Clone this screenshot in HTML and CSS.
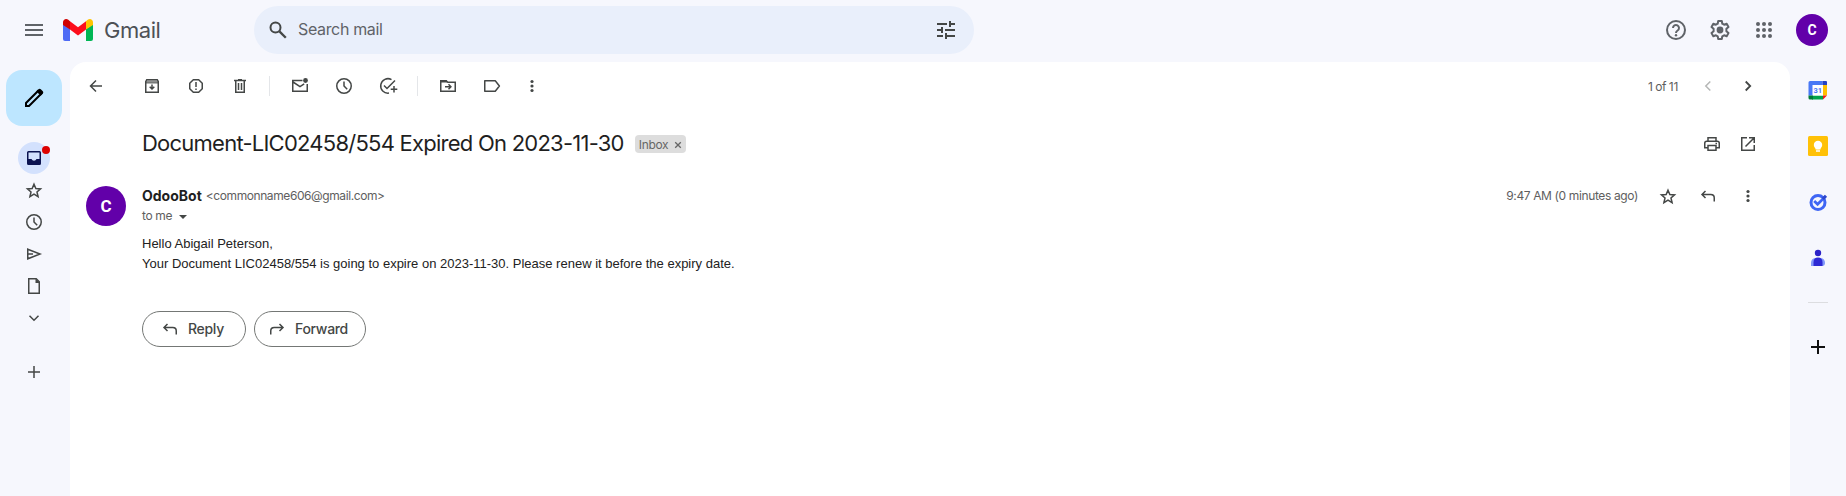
FILE: index.html
```html
<!DOCTYPE html>
<html lang="en">
<head>
<meta charset="utf-8">
<title>Gmail</title>
<link rel="stylesheet" href="styles.css">
</head>
<body>
<svg class="defs" aria-hidden="true">
  <symbol id="clock" viewBox="0 0 20 20"><circle cx="10" cy="10" r="7.25"/><path d="M10 5.5V10l3.2 3.3"/></symbol>
  <symbol id="star" viewBox="0 0 20 20"><path d="M10 4.200l1.850 4.300 4.700.4-3.560 3.100 1.080 4.600L10 14.150 5.930 16.600l1.080-4.600-3.560-3.100 4.700-.4z"/></symbol>
  <symbol id="dots" viewBox="0 0 20 20"><g fill="currentColor" stroke="none"><circle cx="10" cy="5.5" r="1.6"/><circle cx="10" cy="10" r="1.6"/><circle cx="10" cy="14.5" r="1.6"/></g></symbol>
  <symbol id="reply" viewBox="0 0 20 20"><path d="M7.500 5L4 8.500 7.500 12M4 8.500h8.800q3.450 0 3.450 3.400v3.600"/></symbol>
</svg>
<div class="app">
  <header class="header">
    <button class="menu"><svg class="i" viewBox="0 0 20 20"><path stroke-width="2" d="M1 5h18M1 10h18M1 15h18"/></svg></button>
    <div class="brand">
      <svg class="logo" viewBox="0 0 30 22"><path fill="#4f6bf5" d="M0 5l7 5v12H2a2 2 0 0 1-2-2z"/><path fill="#00b655" d="M23 10l7-5v15a2 2 0 0 1-2 2h-5z"/><path fill="#fc0d1b" d="M7 2.2l8 6 8-6v8.2l-8 6-8-6z"/><path fill="#d00000" d="M0 7V3.3C0 .5 3-.9 5.3.8L7 2.2v8.2L0 6z"/><path fill="#ffc400" d="M23 2.2L24.7.8C27-.9 30 .5 30 3.3V6l-7 4.4z"/></svg>
      <span class="wordmark">Gmail</span>
    </div>
    <div class="search">
      <svg class="i" viewBox="0 0 20 20"><circle cx="7.5" cy="7.5" r="5" stroke-width="2"/><path stroke-width="2.3" d="M11.4 11.4l6.4 6.4"/></svg>
      <span class="placeholder">Search mail</span>
      <svg class="i" viewBox="0 0 20 20"><path stroke-width="2" d="M1 4h10M14 4h5M14 1v6M1 10h5M6 7v6M9 10h10M1 16h6M10 13v6M10 16h9"/></svg>
    </div>
    <div class="account">
      <span class="cell"><svg class="i big" viewBox="0 0 24 24"><circle cx="12" cy="12" r="9" stroke-width="2"/><path stroke-width="2" d="M9 10a3 3 0 1 1 4.6 2.5Q12 13.600 12 15"/><circle cx="12" cy="17.2" r="1.2" fill="currentColor" stroke="none"/></svg></span>
      <span class="cell"><svg class="i big" viewBox="0 0 24 24"><path stroke-width="2" stroke-linejoin="round" d="M10.200 3h3.600l.5 2.700 1.800 1 2.600-.9 1.800 3.100-2.100 1.800v2.600l2.100 1.800-1.800 3.100-2.600-.9-1.800 1-.5 2.700h-3.600l-.5-2.700-1.800-1-2.600.9-1.800-3.100 2.100-1.800v-2.600L3.500 8.900l1.800-3.100 2.600.9 1.800-1z"/><circle cx="12" cy="12" r="3.400" fill="currentColor" stroke="none"/></svg></span>
      <span class="cell"><svg class="i big" viewBox="0 0 24 24"><g fill="currentColor" stroke="none"><circle cx="6" cy="6" r="2"/><circle cx="12" cy="6" r="2"/><circle cx="18" cy="6" r="2"/><circle cx="6" cy="12" r="2"/><circle cx="12" cy="12" r="2"/><circle cx="18" cy="12" r="2"/><circle cx="6" cy="18" r="2"/><circle cx="12" cy="18" r="2"/><circle cx="18" cy="18" r="2"/></g></svg></span>
      <span class="avatar small">C</span>
    </div>
  </header>

  <nav class="rail">
    <button class="compose"><svg class="i big" viewBox="0 0 24 24"><path stroke-width="2" d="M4 20v-3L16 5l3 3L7 20z"/><path fill="currentColor" stroke="none" d="M14.300 5.300l2.500-2.300q1-.7 2 .2l2 2q.9 1 .2 2l-2.300 2.500z"/></svg></button>
    <span class="inbox"><svg class="i" viewBox="0 0 20 20"><path fill="currentColor" stroke="none" fill-rule="evenodd" d="M4.500 3h11Q17 3 17 4.500v11q0 1.500-1.500 1.500h-11Q3 17 3 15.500v-11Q3 3 4.500 3zm0 1.500V11h3q.7 1.700 2.500 1.700t2.500-1.700h3V4.500z"/></svg><i class="unread"></i></span>
    <span class="slot first"><svg class="i"><use href="#star"/></svg></span>
    <span class="slot"><svg class="i"><use href="#clock"/></svg></span>
    <span class="slot"><svg class="i" viewBox="0 0 20 20"><path d="M3.750 5.200L16 10 3.750 14.800zM4 10h5"/></svg></span>
    <span class="slot"><svg class="i" viewBox="0 0 20 20"><path d="M4.750 2.750h7.500l3 3v11.500H4.750z"/><path fill="currentColor" stroke="none" d="M11.500 2.500L16 7h-4.500z"/></svg></span>
    <span class="slot"><svg class="i" viewBox="0 0 20 20"><path d="M5.500 7.700l4.500 4.500 4.500-4.500"/></svg></span>
    <span class="slot add"><svg class="i" viewBox="0 0 20 20"><path d="M10 4v12M4 10h12"/></svg></span>
  </nav>

  <main class="mail">
    <div class="toolbar">
      <span class="cell back"><svg class="i" viewBox="0 0 20 20"><path d="M16 10H5M10 4.500L4.500 10l5.500 5.500"/></svg></span>
      <span class="cell"><svg class="i" viewBox="0 0 20 20"><path d="M3.750 5.500l1-1.750h10.500l1 1.750v10.750H3.750zM10 8.500v4M7.700 10.700l2.300 2.300 2.300-2.300"/><path stroke-width="2" opacity=".6" d="M4 5.500h12"/><path stroke-width="1" d="M4 6.900h12"/></svg></span>
      <span class="cell"><svg class="i" viewBox="0 0 20 20"><path d="M7.300 3.750h5.400l3.550 3.550v5.400l-3.550 3.550H7.300L3.750 12.700V7.300z" stroke-linejoin="round"/><path d="M10 6v5M10 12.500V14"/></svg></span>
      <span class="cell"><svg class="i" viewBox="0 0 20 20"><path d="M4 4.500h12M8 3.700h4M5.750 5v11.250h8.500V5M8.500 7v7M11.500 7v7"/></svg></span>
      <i class="rule"></i>
      <span class="cell"><svg class="i" viewBox="0 0 20 20"><path d="M12.500 4.500H2.750v10.750h14.500V8M3 6l7 4.600 4.200-2.700"/><circle cx="15.500" cy="4.500" r="2.400" fill="currentColor" stroke="none"/></svg></span>
      <span class="cell"><svg class="i"><use href="#clock"/></svg></span>
      <span class="cell"><svg class="i" viewBox="0 0 20 20"><path d="M13.500 3.600A7.250 7.250 0 1 0 11 17.100M6 9.500l3 3 8-8M16 10v6.500M12.700 13.250h6.600"/></svg></span>
      <i class="rule"></i>
      <span class="cell"><svg class="i" viewBox="0 0 20 20"><path d="M2.750 4.750h5.500l1.500 1.500h7.500v9H2.750zM7 10.750h5.500M10.500 8.300l2.400 2.450-2.400 2.450"/><path stroke-width="2" d="M3 5.500h6"/></svg></span>
      <span class="cell"><svg class="i" viewBox="0 0 20 20"><path stroke-linejoin="round" d="M2.750 4.750h10.500L17.400 10l-4.150 5.250H2.750z"/></svg></span>
      <span class="cell narrow"><svg class="i"><use href="#dots"/></svg></span>
      <span class="count">1 of 11</span>
      <span class="cell step off"><svg class="i" viewBox="0 0 20 20"><path d="M12.300 5.500L7.800 10l4.500 4.500"/></svg></span>
      <span class="cell step"><svg class="i" viewBox="0 0 20 20"><path d="M7.700 5.500l4.500 4.500-4.500 4.500" stroke-width="1.800"/></svg></span>
    </div>

    <div class="subject">
      <h1>Document-LIC02458/554 Expired On 2023-11-30</h1>
      <span class="tag"><span>Inbox</span><svg viewBox="0 0 8 8"><path d="M1.200 1.200l5.600 5.600M6.800 1.200L1.200 6.800"/></svg></span>
      <span class="cell print"><svg class="i" viewBox="0 0 20 20"><path d="M6 7V3.750h8V7M5.750 13.750h-3v-4.500Q2.750 7.250 4.750 7.250h10.500q2 0 2 2v4.500h-3M6 11.500h8v4.750H6z"/><path d="M13.500 9.500H15"/></svg></span>
      <span class="cell open"><svg class="i" viewBox="0 0 20 20"><path d="M9 3.750H3.750v12.500h12.500V11M11 3.750h5.250V9M16 4l-8.500 8.500"/></svg></span>
    </div>

    <article class="message">
      <span class="avatar">C</span>
      <div class="content">
        <div class="from">
          <b>OdooBot</b><span class="email">&lt;commonname606@gmail.com&gt;</span>
          <span class="time">9:47 AM (0 minutes ago)</span>
          <span class="cell step"><svg class="i"><use href="#star"/></svg></span>
          <span class="cell step"><svg class="i"><use href="#reply"/></svg></span>
          <span class="cell step"><svg class="i"><use href="#dots"/></svg></span>
        </div>
        <div class="to"><span>to me</span><i class="caret"></i></div>
        <div class="body">Hello Abigail Peterson,<br>Your Document LIC02458/554 is going to expire on 2023-11-30. Please renew it before the expiry date.</div>
        <div class="actions">
          <button class="pill"><svg class="i"><use href="#reply"/></svg><span>Reply</span></button>
          <button class="pill forward"><svg class="i flip"><use href="#reply"/></svg><span>Forward</span></button>
        </div>
      </div>
    </article>
  </main>

  <aside class="addons">
    <svg viewBox="0 0 20 20"><path fill="#4878f5" d="M2 1h12.500v4H5v10.500H.500V2.500Q.500 1 2 1z"/><path fill="#2442c4" d="M14.500 1H18q1 0 1 1v3h-4.500z"/><path fill="#ffc000" d="M15 5h4v10.500h-4z"/><path fill="#00a34a" d="M4 15.500h11v4H4z"/><path fill="#007b38" d="M.500 15.500H5v4H2q-1.500 0-1.500-1.500z"/><path fill="#f01818" d="M15 15.500h4l-4 4z"/><path fill="#fff" d="M4.500 5h10.500v10.500H4.500z"/><text x="9.800" y="13.100" class="day">31</text></svg>
    <svg viewBox="0 0 20 20"><rect width="20" height="20" rx="1.500" fill="#ffc107"/><circle cx="10" cy="9" r="4.200" fill="#fff"/><path fill="#fff" d="M7.500 11h5v2.500h-5zM8 14.300h4v1.500H8z"/></svg>
    <svg viewBox="0 0 20 20"><circle cx="10" cy="10.500" r="7" fill="none" stroke="#3f66f4" stroke-width="3"/><path fill="none" stroke="#3f66f4" stroke-width="2.700" d="M6.200 9l3.400 3.300L17.500 4.400"/><path fill="none" stroke="#2c46cc" stroke-width="3" d="M14.800 7l3.200-3.200"/></svg>
    <svg viewBox="0 0 20 20"><circle cx="10" cy="5" r="3.200" fill="#2b22c8"/><path fill="#8298fa" d="M3 18v-3q0-4.500 4.500-5h5q4.500.5 4.500 5 0 3-3 3z"/><path fill="#2d29d4" d="M5.500 18v-3.500q0-5 4.500-5t4.500 5V18z"/></svg>
    <i class="divider"></i>
    <svg class="plus" viewBox="0 0 20 20"><path stroke="#111" stroke-width="2" d="M10 3v14M3 10h14"/></svg>
  </aside>
</div>
</body>
</html>
```
FILE: styles.css
```css
* { box-sizing: border-box; }
body { margin: 0; font-family: Inter, Roboto, sans-serif; color: #444746; overflow: hidden; }
button { border: 0; padding: 0; background: none; color: inherit; font: inherit; }
.defs { display: none; }
.app { display: grid; grid-template: 62px 434px / 70px 1fr 56px; height: 496px; background: #f6f7fd; }
.i { width: 20px; height: 20px; flex: none; fill: none; stroke: currentColor; stroke-width: 1.5; display: block; }
.big { width: 24px; height: 24px; }
.cell { width: 44px; flex: none; display: flex; justify-content: center; align-items: center; }
.step { width: 40px; }
.narrow { width: 36px; }

.header { grid-column: 1 / -1; display: flex; align-items: center; padding: 0 18px 2px 24px; color: #5f6368; }
.menu { margin-right: 19px; }
.brand { display: flex; align-items: center; width: 191px; gap: 11px; }
.logo { width: 30px; height: 22px; }
.wordmark { font-size: 22px; letter-spacing: -.45px; line-height: 28px; color: #4d5156; }
.search { width: 720px; height: 48px; border-radius: 24px; background: #e9effb; display: flex; align-items: center; padding: 0 18px 0 14px; color: #444746; }
.placeholder { flex: 1; margin-left: 10px; font-size: 16px; letter-spacing: -.35px; color: #5f6368; margin-top: -2px; }
.account { margin-left: auto; display: flex; align-items: center; }
.avatar { width: 40px; height: 40px; flex: none; border-radius: 50%; background: #6200a9; color: #fff; font: 700 17px Roboto, sans-serif; display: flex; align-items: center; justify-content: center; }
.avatar.small { width: 32px; height: 32px; font-size: 14px; margin-left: 10px; }

.rail { display: flex; flex-direction: column; align-items: center; padding: 8px 2px 0 0; }
.compose { width: 56px; height: 56px; flex: none; border-radius: 16px; background: #bde6ff; color: #000; display: flex; align-items: center; justify-content: center; }
.inbox { position: relative; width: 32px; height: 32px; flex: none; margin-top: 16px; border-radius: 50%; background: #d3e1fd; color: #0b1250; display: flex; align-items: center; justify-content: center; }
.unread { position: absolute; right: 0; top: 4px; width: 8px; height: 8px; border-radius: 50%; background: #dc0000; }
.slot { height: 32px; flex: none; display: flex; align-items: center; }
.slot.add { margin-top: 22px; }

.mail { background: #fff; border-radius: 16px 16px 0 0; }
.toolbar { display: flex; height: 48px; padding: 0 22px 0 4px; }
.back { margin-right: 12px; }
.rule { width: 16px; flex: none; }
.rule::before { content: ""; display: block; width: 1px; height: 20px; margin: 14px 0 0 7px; background: #e4e6e9; }
.count { margin-left: auto; margin-right: 10px; font-size: 12px; letter-spacing: -.3px; line-height: 49px; color: #5e5e5e; word-spacing: -.5px; }
.off { color: #b5b7b6; }

.subject { display: flex; align-items: center; height: 68px; padding: 0 22px 0 72px; }
h1 { margin: -1px 0 1px; font-size: 22px; font-weight: 400; letter-spacing: -.76px; line-height: 28px; color: #1f1f1f; white-space: nowrap; }
.tag { margin-left: 11px; display: flex; align-items: center; justify-content: space-between; width: 51px; height: 18px; padding: 0 4px; border-radius: 4px; background: #ddd; color: #666; font-size: 12px; letter-spacing: -.3px; line-height: 17px; }
.tag svg { width: 8px; height: 8px; stroke: #666; stroke-width: 1.3; margin-top: 2px; }
.print { margin-left: auto; width: 36px; }
.open { width: 36px; margin-right: 2px; }

.message { display: flex; gap: 16px; padding: 8px 22px 0 16px; }
.content { flex: 1; }
.from { display: flex; align-items: center; height: 20px; font-size: 12px; color: #5e5e5e; }
.from b, .email, .time { margin-top: -2px; }
.from b { font-size: 14px; font-weight: 700; color: #1f1f1f; margin-right: 4px; }
.email { letter-spacing: -.41px; }
.from .cell { color: #444746; }
.time { margin-left: auto; margin-right: 10px; letter-spacing: -.37px; }
.to { display: flex; align-items: center; gap: 7px; height: 20px; font-size: 12px; letter-spacing: -.35px; color: #5e5e5e; }
.to span { margin-top: -1px; }
.caret { border: 4px solid transparent; border-top-color: #444746; border-bottom: 0; margin-top: 1px; }
.body { font: 13px/20px "Liberation Sans", Arial, sans-serif; color: #222; margin-top: 8px; }
.actions { display: flex; gap: 8px; margin-top: 37px; }
.pill { width: 104px; height: 36px; border: 1px solid #747775; border-radius: 18px; display: flex; align-items: center; padding-left: 17px; gap: 8px; font-size: 14px; font-weight: 500; letter-spacing: -.3px; }
.pill span { margin-top: -1px; }
.forward { width: 112px; padding-left: 12px; }
.flip { transform: scaleX(-1); }

.addons { display: flex; flex-direction: column; align-items: center; gap: 36px; padding-top: 18px; }
.addons svg { width: 20px; height: 20px; flex: none; }
.day { font: 700 7.5px Roboto, sans-serif; fill: #4878f5; text-anchor: middle; }
.divider { width: 20px; height: 1px; background: #dcdde0; margin-top: -2px; }
.addons .plus { margin-top: -2px; }
```
